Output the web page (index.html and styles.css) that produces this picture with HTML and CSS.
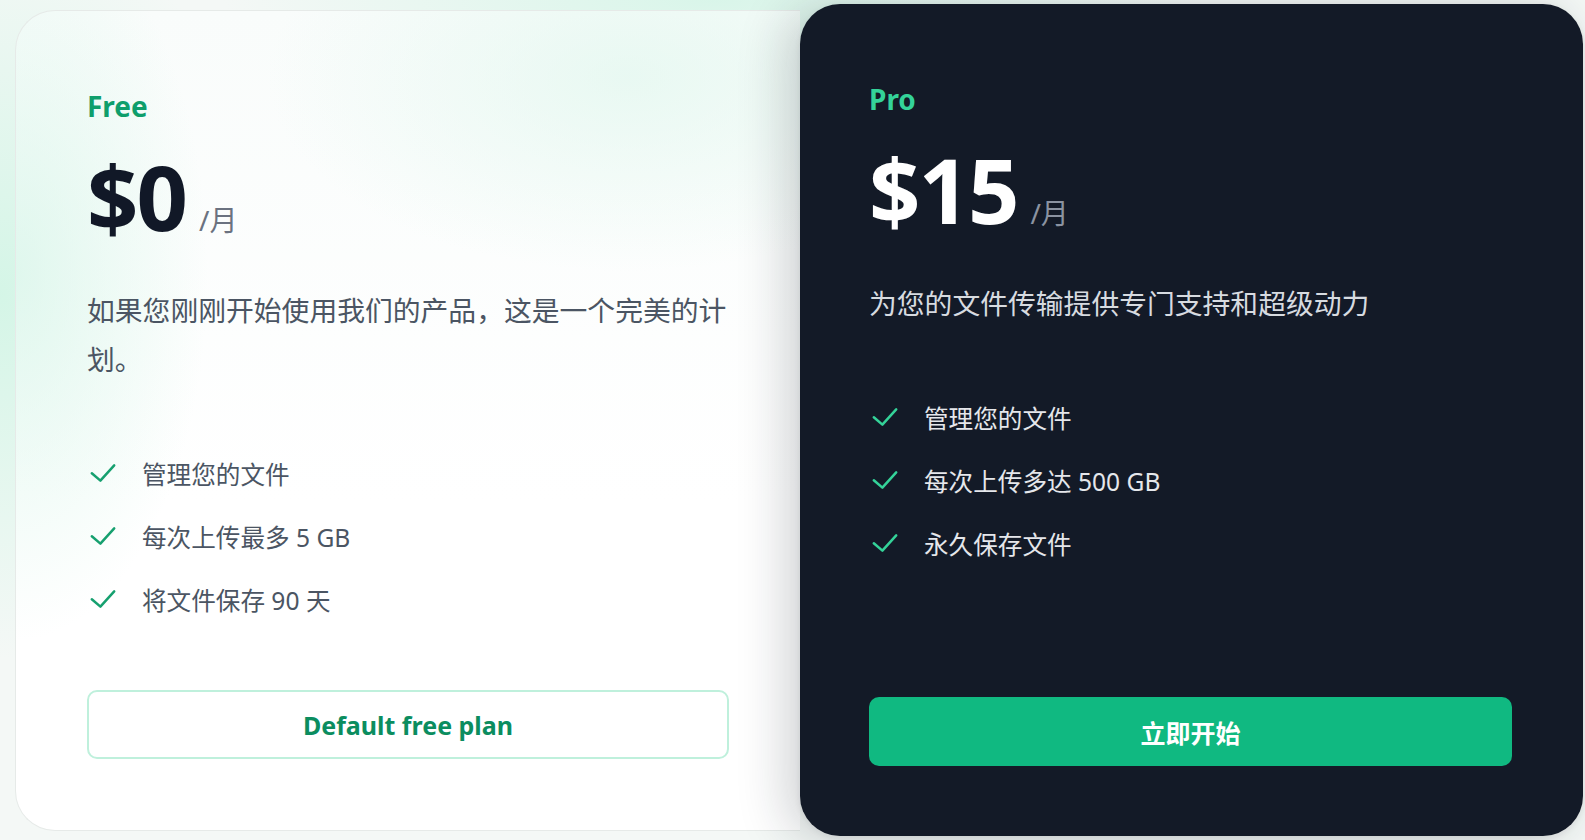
FILE: index.html
```html
<!DOCTYPE html>
<html lang="zh-CN">
<head>
<meta charset="utf-8">
<title>Pricing</title>
<link rel="stylesheet" href="styles.css">
</head>
<body>
<main class="pricing">
  <section class="card card-free">
    <h3 class="plan-name">Free</h3>
    <div class="price-row">
      <span class="price">$0</span>
      <span class="per">/月</span>
    </div>
    <p class="desc">如果您刚刚开始使用我们的产品，这是一个完美的计划。</p>
    <ul class="features">
      <li class="feature">
        <svg class="check" viewBox="0 0 26 20" aria-hidden="true"><path d="M1.8 10.2 10.4 17.6 24.2 2.4"/></svg>
        <span>管理您的文件</span>
      </li>
      <li class="feature">
        <svg class="check" viewBox="0 0 26 20" aria-hidden="true"><path d="M1.8 10.2 10.4 17.6 24.2 2.4"/></svg>
        <span>每次上传最多 5 GB</span>
      </li>
      <li class="feature">
        <svg class="check" viewBox="0 0 26 20" aria-hidden="true"><path d="M1.8 10.2 10.4 17.6 24.2 2.4"/></svg>
        <span>将文件保存 90 天</span>
      </li>
    </ul>
    <button class="btn btn-outline" type="button">Default free plan</button>
  </section>

  <section class="card card-pro">
    <h3 class="plan-name">Pro</h3>
    <div class="price-row">
      <span class="price">$15</span>
      <span class="per">/月</span>
    </div>
    <p class="desc">为您的文件传输提供专门支持和超级动力</p>
    <ul class="features">
      <li class="feature">
        <svg class="check" viewBox="0 0 26 20" aria-hidden="true"><path d="M1.8 10.2 10.4 17.6 24.2 2.4"/></svg>
        <span>管理您的文件</span>
      </li>
      <li class="feature">
        <svg class="check" viewBox="0 0 26 20" aria-hidden="true"><path d="M1.8 10.2 10.4 17.6 24.2 2.4"/></svg>
        <span>每次上传多达 500 GB</span>
      </li>
      <li class="feature">
        <svg class="check" viewBox="0 0 26 20" aria-hidden="true"><path d="M1.8 10.2 10.4 17.6 24.2 2.4"/></svg>
        <span>永久保存文件</span>
      </li>
    </ul>
    <button class="btn btn-solid" type="button">立即开始</button>
  </section>
</main>
</body>
</html>
```

FILE: styles.css
```css
* {
  box-sizing: border-box;
}

html, body {
  margin: 0;
  padding: 0;
}

body {
  width: 1585px;
  height: 840px;
  overflow: hidden;
  font-family: "Noto Sans", "Noto Sans CJK SC", sans-serif;
  background:
    radial-gradient(ellipse 420px 520px at 0% 35%, rgba(209, 245, 229, 0.9), rgba(209, 245, 229, 0) 70%),
    radial-gradient(ellipse 700px 160px at 45% 0%, rgba(214, 245, 232, 0.9), rgba(214, 245, 232, 0) 70%),
    #f4f8f6;
}

.pricing {
  display: flex;
  align-items: flex-start;
  padding: 10px 2px 0 15px;
}

.card {
  display: flex;
  flex-direction: column;
  padding: 72px 71px 71px 72px;
}

.card-free {
  width: 785px;
  height: 821px;
  border: 1px solid #e6eae8;
  border-right: none;
  border-radius: 40px 0 0 40px;
  padding-left: 71px;
  background:
    radial-gradient(ellipse 240px 460px at 0% 32%, rgba(214, 245, 232, 0.75), rgba(214, 245, 232, 0) 80%),
    radial-gradient(ellipse 480px 260px at 78% 8%, rgba(225, 247, 238, 0.7), rgba(225, 247, 238, 0) 75%),
    linear-gradient(180deg, #f9fcfb 0%, #ffffff 60%, #ffffff 100%);
}

.card-pro {
  position: relative;
  width: 783px;
  height: 832px;
  margin-top: -6px;
  border-radius: 40px;
  background: #131a27;
  padding-top: 72px;
  padding-left: 69px;
  padding-right: 71px;
  padding-bottom: 70px;
  box-shadow: -14px 4px 50px rgba(20, 30, 40, 0.2), 0 2px 6px rgba(20, 30, 40, 0.08);
}

.plan-name {
  margin: 0;
  font-size: 28px;
  line-height: 46px;
  font-weight: 700;
}

.card-free .plan-name {
  color: #0f9e6b;
}

.card-pro .plan-name {
  color: #34d399;
}

.price-row {
  display: flex;
  align-items: baseline;
  margin-top: 22px;
}

.price {
  font-size: 90px;
  line-height: 90px;
  font-weight: 700;
  letter-spacing: -2px;
}

.card-free .price {
  color: #111827;
}

.card-pro .price {
  color: #ffffff;
}

.per {
  margin-left: 13px;
  font-size: 28px;
  line-height: 30px;
}

.card-free .per {
  color: #6b7280;
}

.card-pro .per {
  color: #8b93a1;
}

.desc {
  margin: 45px 0 0 0;
  font-size: 27.8px;
  line-height: 49px;
}

.card-free .desc {
  color: #4b5563;
}

.card-pro .desc {
  color: #d7dbe0;
}

.features {
  list-style: none;
  margin: 67px 0 0 0;
  padding: 0;
  display: flex;
  flex-direction: column;
  gap: 19px;
}

.feature {
  display: flex;
  align-items: center;
  height: 44px;
  font-size: 24.6px;
}

.card-free .feature {
  color: #4b5563;
}

.card-pro .feature {
  color: #e5e7eb;
}

.check {
  width: 26px;
  height: 20px;
  margin-left: 3px;
  margin-right: 26px;
  fill: none;
  stroke-width: 2.5;
  stroke-linecap: round;
  stroke-linejoin: round;
}

.card-free .check {
  stroke: #16a06f;
}

.card-pro .check {
  stroke: #34d399;
}

.btn {
  margin-top: auto;
  width: 100%;
  height: 69px;
  border-radius: 10px;
  font-family: "Noto Sans", "Noto Sans CJK SC", sans-serif;
  font-size: 25px;
  font-weight: 700;
  cursor: pointer;
}

.btn-outline {
  background: #ffffff;
  border: 2px solid #bff0dc;
  color: #0b8d5f;
}

.btn-solid {
  background: #10b981;
  border: none;
  color: #ffffff;
}
```
